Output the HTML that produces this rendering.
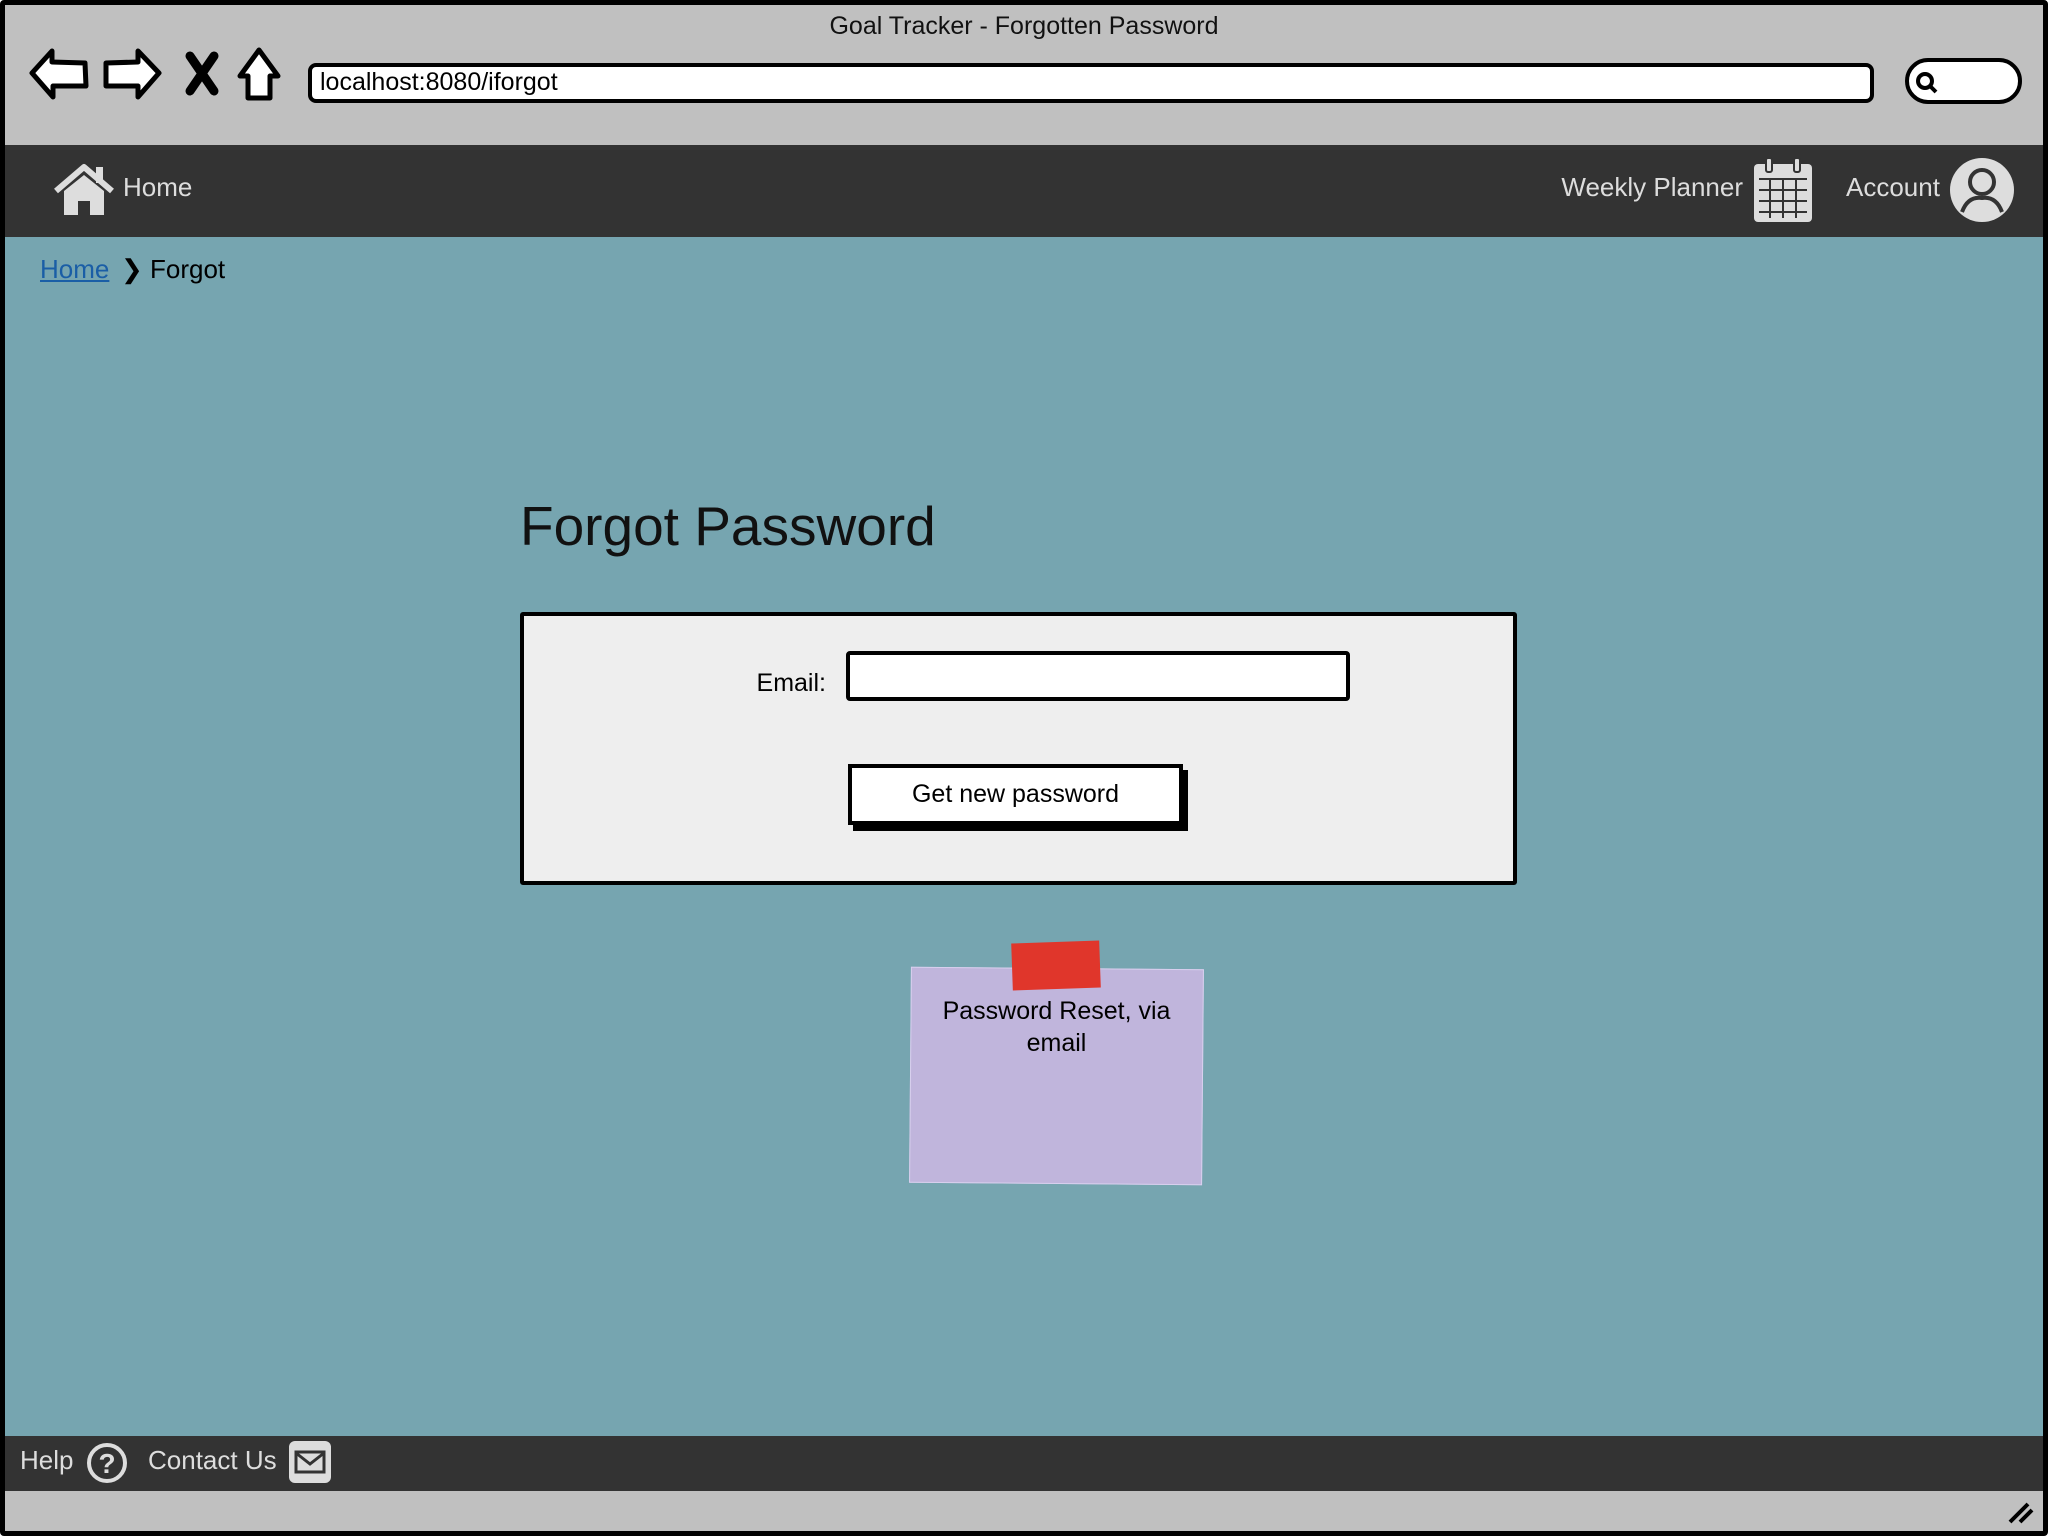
<!DOCTYPE html>
<html><head><meta charset="utf-8"><style>
*{margin:0;padding:0;box-sizing:border-box}
body{width:2048px;height:1536px;position:relative;overflow:hidden;background:#fff;font-family:"Liberation Sans",sans-serif}
.a{position:absolute}
</style></head><body>
<div class="a" style="left:0;top:0;width:2048px;height:1536px;background:#c0c0c0;border:5px solid #000;border-radius:4px"></div>
<div class="a" style="left:0;top:12px;width:2048px;text-align:center;font-size:25px;color:#111">Goal Tracker - Forgotten Password</div>
<svg class="a" style="left:28px;top:46px" width="260" height="58" viewBox="0 0 260 58">
<path d="M4 27 L24 5 L24 16 L57 17 L58 40 L25 40 L25 51 Z" fill="#fff" stroke="#000" stroke-width="5" stroke-linejoin="round"/>
<path d="M131 27 L110 5 L110 16 L78 17 L78 40 L110 40 L110 51 Z" fill="#fff" stroke="#000" stroke-width="5" stroke-linejoin="round"/>
<path d="M162 10 L186 45 M186 10 L162 45" stroke="#000" stroke-width="9" stroke-linecap="round"/>
<path d="M231 4 L212 30 L220 30 L220 52 L242 52 L242 30 L250 30 Z" fill="#fff" stroke="#000" stroke-width="5" stroke-linejoin="round"/>
</svg>
<div class="a" style="left:308px;top:63px;width:1566px;height:40px;background:#fff;border:4px solid #000;border-radius:8px"></div>
<div class="a" style="left:320px;top:64px;font-size:25px;line-height:36px;color:#000">localhost:8080/iforgot</div>
<div class="a" style="left:1905px;top:58px;width:117px;height:46px;background:#fff;border:4px solid #000;border-radius:24px"></div>
<svg class="a" style="left:1914px;top:70px" width="26" height="26"><circle cx="11" cy="11" r="7" fill="none" stroke="#000" stroke-width="4"/><path d="M15 15 L22 22" stroke="#000" stroke-width="4"/></svg>
<div class="a" style="left:5px;top:145px;width:2038px;height:92px;background:#333"></div>
<svg class="a" style="left:54px;top:163px" width="60" height="52" viewBox="0 0 60 52"><path d="M2 28 L30 4 L58 28" fill="none" stroke="#ddd" stroke-width="6" stroke-linejoin="round"/><rect x="42" y="4" width="7" height="16" fill="#ddd"/><path d="M10 28 L30 12 L50 28 L50 52 L36 52 L36 38 L24 38 L24 52 L10 52 Z" fill="#ddd"/></svg>
<div class="a" style="left:123px;top:172px;font-size:26px;color:#ddd">Home</div>
<div class="a" style="left:1560px;top:172px;width:183px;text-align:right;font-size:26px;color:#ddd">Weekly Planner</div>
<svg class="a" style="left:1752px;top:156px" width="62" height="68" viewBox="0 0 62 68"><rect x="2" y="8" width="58" height="58" rx="4" fill="#ddd"/><rect x="14" y="2" width="6" height="14" rx="2" fill="#ddd" stroke="#333" stroke-width="2"/><rect x="42" y="2" width="6" height="14" rx="2" fill="#ddd" stroke="#333" stroke-width="2"/><g fill="#333"><rect x="7" y="22" width="48" height="2"/><rect x="7" y="33" width="48" height="2"/><rect x="7" y="44" width="48" height="2"/><rect x="7" y="55" width="48" height="2"/><rect x="17" y="22" width="2" height="40"/><rect x="30" y="22" width="2" height="40"/><rect x="43" y="22" width="2" height="40"/></g></svg>
<div class="a" style="left:1846px;top:172px;font-size:26px;color:#ddd">Account</div>
<svg class="a" style="left:1950px;top:158px" width="64" height="64" viewBox="0 0 64 64"><circle cx="32" cy="32" r="32" fill="#ddd"/><circle cx="32" cy="24" r="12" fill="none" stroke="#333" stroke-width="4"/><path d="M12 54 Q18 38 32 40 Q46 38 52 54" fill="none" stroke="#333" stroke-width="4"/></svg>
<div class="a" style="left:5px;top:237px;width:2038px;height:1199px;background:#76a5b0"></div>
<div class="a" style="left:40px;top:254px;font-size:26px;color:#1a5ea6;text-decoration:underline">Home</div>
<div class="a" style="left:121px;top:254px;font-size:26px;color:#000">❯ Forgot</div>
<div class="a" style="left:520px;top:494px;font-size:55px;color:#111">Forgot Password</div>
<div class="a" style="left:520px;top:612px;width:997px;height:273px;background:#eee;border:4px solid #000;border-radius:3px"></div>
<div class="a" style="left:700px;top:669px;width:126px;text-align:right;font-size:25px;color:#000">Email:</div>
<div class="a" style="left:846px;top:651px;width:504px;height:50px;background:#fff;border:4px solid #000;border-radius:4px"></div>
<div class="a" style="left:853px;top:770px;width:335px;height:61px;background:#000"></div>
<div class="a" style="left:848px;top:764px;width:335px;height:61px;background:#fff;border:4px solid #000;text-align:center;font-size:25px;line-height:53px">Get new password</div>
<div class="a" style="left:910px;top:968px;width:293px;height:216px;background:#c0b5dc;border:1px solid #d8d0ee;transform:rotate(0.5deg)"></div>
<div class="a" style="left:1012px;top:942px;width:88px;height:47px;background:#e0362b;transform:rotate(-2deg)"></div>
<div class="a" style="left:910px;top:995px;width:293px;text-align:center;font-size:25px;line-height:32px;color:#000">Password Reset, via<br>email</div>
<div class="a" style="left:5px;top:1436px;width:2038px;height:55px;background:#333"></div>
<div class="a" style="left:20px;top:1445px;font-size:26px;color:#ddd">Help</div>
<svg class="a" style="left:85px;top:1441px" width="44" height="44"><circle cx="22" cy="22" r="18" fill="none" stroke="#ddd" stroke-width="4"/><text x="22" y="32" text-anchor="middle" font-size="28" font-weight="bold" fill="#ddd" font-family="Liberation Sans">?</text></svg>
<div class="a" style="left:148px;top:1445px;font-size:26px;color:#ddd">Contact Us</div>
<svg class="a" style="left:289px;top:1441px" width="42" height="42"><rect x="0" y="0" width="42" height="42" rx="6" fill="#ddd"/><rect x="7" y="11" width="28" height="20" fill="none" stroke="#333" stroke-width="3"/><path d="M7 12 L21 23 L35 12" fill="none" stroke="#333" stroke-width="3"/></svg>
<svg class="a" style="left:2006px;top:1496px" width="30" height="30"><path d="M4 26 L22 8 M14 26 L26 14" stroke="#000" stroke-width="4"/></svg>
</body></html>
